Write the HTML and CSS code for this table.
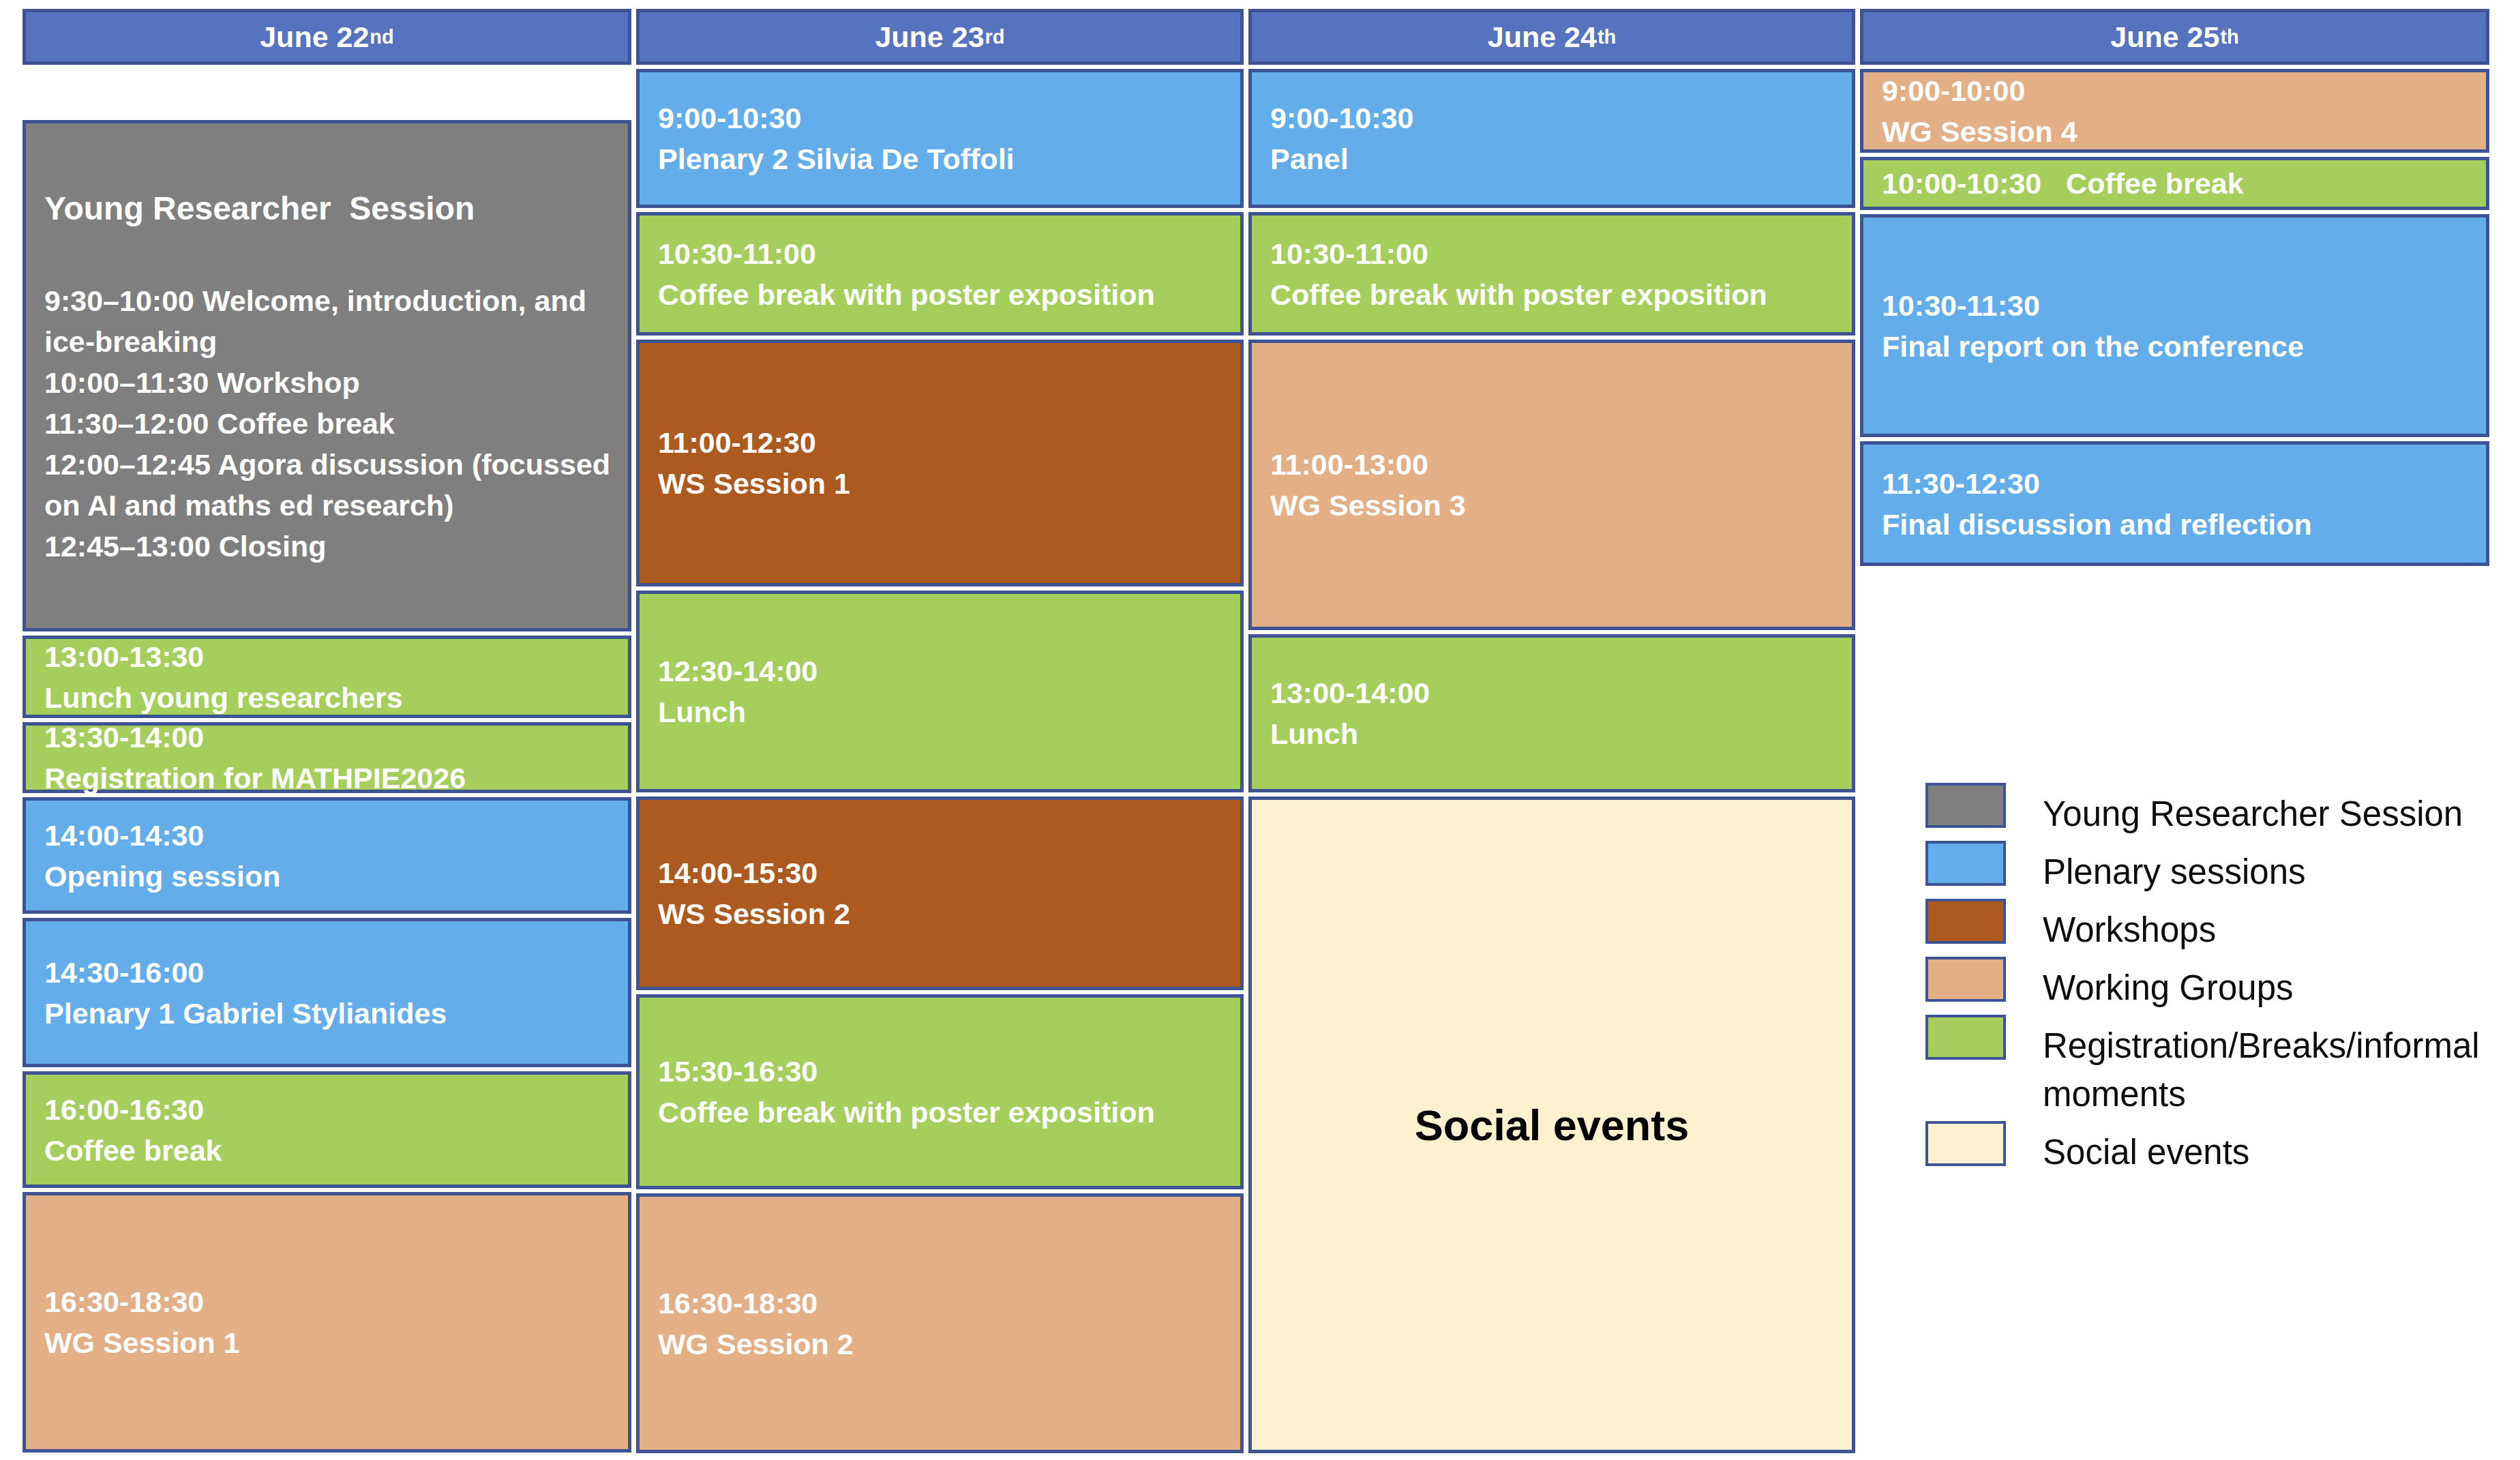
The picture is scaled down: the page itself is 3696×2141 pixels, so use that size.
FILE: index.html
```html
<!DOCTYPE html>
<html lang="en">
<head>
<meta charset="utf-8">
<title>MATHPIE 2026 programme</title>
<link rel="stylesheet" href="styles.css">
</head>
<body>
<div class="schedule">
  <section class="day day-1">
    <div class="day-head">June 22<sup>nd</sup></div>
    <div class="slot yrs late-start" style="height:750px">
      <div class="yrs-title">Young Researcher&nbsp; Session</div>
      <div>9:30–10:00 Welcome, introduction, and</div>
      <div>ice-breaking</div>
      <div>10:00–11:30 Workshop</div>
      <div>11:30–12:00 Coffee break</div>
      <div>12:00–12:45 Agora discussion (focussed</div>
      <div>on AI and maths ed research)</div>
      <div>12:45–13:00 Closing</div>
    </div>
    <div class="slot break" style="height:121px"><div>13:00-13:30</div><div>Lunch young researchers</div></div>
    <div class="slot break" style="height:104px"><div>13:30-14:00</div><div>Registration for MATHPIE2026</div></div>
    <div class="slot plenary" style="height:171px"><div>14:00-14:30</div><div>Opening session</div></div>
    <div class="slot plenary" style="height:219px"><div>14:30-16:00</div><div>Plenary 1 Gabriel Stylianides</div></div>
    <div class="slot break" style="height:171px"><div>16:00-16:30</div><div>Coffee break</div></div>
    <div class="slot wg" style="height:382px"><div>16:30-18:30</div><div>WG Session 1</div></div>
  </section>

  <section class="day day-2">
    <div class="day-head">June 23<sup>rd</sup></div>
    <div class="slot plenary" style="height:204px"><div>9:00-10:30</div><div>Plenary 2 Silvia De Toffoli</div></div>
    <div class="slot break" style="height:181px"><div>10:30-11:00</div><div>Coffee break with poster exposition</div></div>
    <div class="slot workshop" style="height:362px"><div>11:00-12:30</div><div>WS Session 1</div></div>
    <div class="slot break" style="height:296px"><div>12:30-14:00</div><div>Lunch</div></div>
    <div class="slot workshop" style="height:284px"><div>14:00-15:30</div><div>WS Session 2</div></div>
    <div class="slot break" style="height:286px"><div>15:30-16:30</div><div>Coffee break with poster exposition</div></div>
    <div class="slot wg" style="height:381px"><div>16:30-18:30</div><div>WG Session 2</div></div>
  </section>

  <section class="day day-3">
    <div class="day-head">June 24<sup>th</sup></div>
    <div class="slot plenary" style="height:204px"><div>9:00-10:30</div><div>Panel</div></div>
    <div class="slot break" style="height:181px"><div>10:30-11:00</div><div>Coffee break with poster exposition</div></div>
    <div class="slot wg" style="height:426px"><div>11:00-13:00</div><div>WG Session 3</div></div>
    <div class="slot break" style="height:232px"><div>13:00-14:00</div><div>Lunch</div></div>
    <div class="slot social" style="height:963px"><div>Social events</div></div>
  </section>

  <section class="day day-4">
    <div class="day-head">June 25<sup>th</sup></div>
    <div class="slot wg" style="height:123px"><div>9:00-10:00</div><div>WG Session 4</div></div>
    <div class="slot break" style="height:78px"><div class="pre">10:00-10:30   Coffee break</div></div>
    <div class="slot plenary" style="height:327px"><div>10:30-11:30</div><div>Final report on the conference</div></div>
    <div class="slot plenary" style="height:183px"><div>11:30-12:30</div><div>Final discussion and reflection</div></div>

    <ul class="legend">
      <li class="legend-item"><span class="swatch yrs"></span><span class="legend-label">Young Researcher Session</span></li>
      <li class="legend-item"><span class="swatch plenary"></span><span class="legend-label">Plenary sessions</span></li>
      <li class="legend-item"><span class="swatch workshop"></span><span class="legend-label">Workshops</span></li>
      <li class="legend-item"><span class="swatch wg"></span><span class="legend-label">Working Groups</span></li>
      <li class="legend-item"><span class="swatch break"></span><span class="legend-label">Registration/Breaks/informal moments</span></li>
      <li class="legend-item"><span class="swatch social"></span><span class="legend-label">Social events</span></li>
    </ul>
  </section>
</div>
</body>
</html>
```

FILE: styles.css
```css
html, body {
  margin: 0;
  padding: 0;
  background: #ffffff;
  overflow: hidden;
}

body {
  font-family: "Liberation Sans", Arial, sans-serif;
}

.schedule {
  display: flex;
  align-items: flex-start;
  gap: 7px;
  padding: 13px 0 0 33px;
}

.day {
  display: flex;
  flex-direction: column;
  gap: 6px;
  flex: none;
}

.day-1 { width: 893px; }
.day-2 { width: 891px; }
.day-3 { width: 890px; }
.day-4 { width: 923px; }

.day-head {
  box-sizing: border-box;
  height: 82px;
  border: 5px solid #3e5393;
  background: #5673bf;
  color: #ffffff;
  font-weight: 700;
  font-size: 43px;
  display: flex;
  align-items: center;
  justify-content: center;
}

.day-head sup {
  font-size: 29px;
  line-height: 0;
  vertical-align: 20px;
  margin-left: 1px;
}

.slot {
  box-sizing: border-box;
  border: 5px solid #3e5393;
  padding: 0 27px;
  display: flex;
  flex-direction: column;
  justify-content: center;
  color: #ffffff;
  font-weight: 700;
  font-size: 43px;
  line-height: 60px;
  white-space: nowrap;
}

.pre { white-space: pre; }

.late-start { margin-top: 75px; }

.yrs { background: #7f7f7f; }
.plenary { background: #63aeea; }
.break { background: #a6ce5c; }
.workshop { background: #ad5a20; }
.wg { background: #e2af86; }
.social { background: #fcf1ce; }

.slot.social {
  color: #000000;
  align-items: center;
  font-size: 63px;
}

.yrs-title {
  font-size: 48px;
  line-height: 70px;
  margin-bottom: 70px;
}

.legend {
  list-style: none;
  margin: 312px 0 0 96px;
  padding: 0;
  display: flex;
  flex-direction: column;
  gap: 4px;
}

.legend-item {
  display: flex;
  align-items: flex-start;
  gap: 54px;
}

.swatch {
  box-sizing: border-box;
  flex: none;
  width: 118px;
  height: 66px;
  border: 4px solid #3e5393;
}

.legend-label {
  padding-top: 10px;
  font-size: 51px;
  line-height: 71px;
  color: #0d0d0d;
  width: 680px;
}
```
